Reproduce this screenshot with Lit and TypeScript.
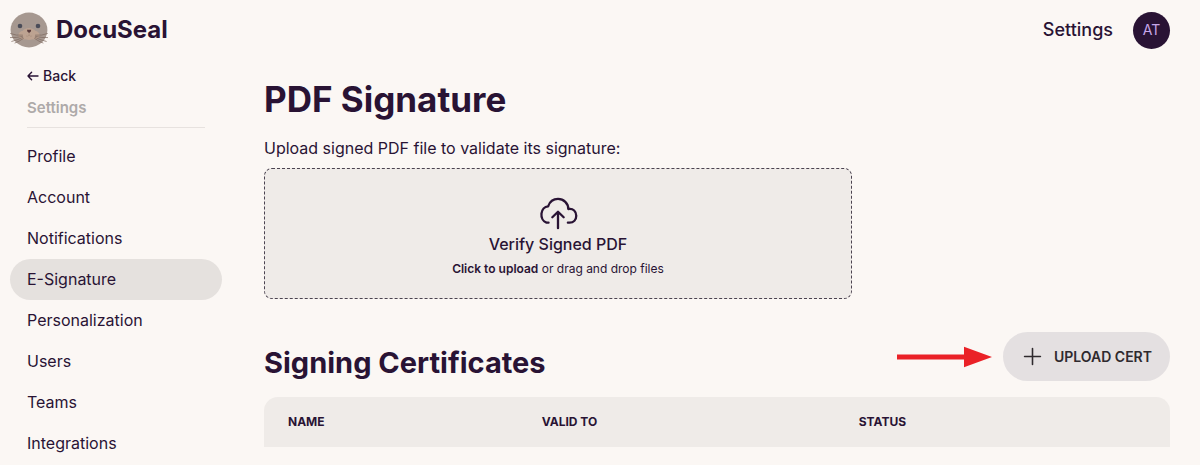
import { LitElement, html, css } from "lit";
import { customElement, property } from "lit/decorators.js";
import { classMap } from "lit/directives/class-map.js";

@customElement("seal-logo")
class SealLogo extends LitElement {
  static styles = css`
    :host { display: block; }
    .logo { display: block; width: 38px; height: 36px; }
  `;
  render() {
    return html`<svg class="logo" viewBox="0 0 38 36" aria-hidden="true">
      <ellipse cx="19" cy="18" rx="18.4" ry="17.4" fill="#a69890" />
      <ellipse cx="19" cy="22" rx="7.5" ry="6" fill="#bda391" />
      <ellipse cx="13.8" cy="23.2" rx="5.4" ry="4.4" fill="#bda391" />
      <ellipse cx="24.2" cy="23.2" rx="5.4" ry="4.4" fill="#bda391" />
      <circle cx="10" cy="14" r="2.3" fill="#4a4c58" />
      <circle cx="28" cy="14" r="2.3" fill="#4a4c58" />
      <path d="M17 17.8h4.2q.4 1.8-2.1 3.2q-2.5-1.4-2.1-3.2z" fill="#593c3c" />
      <path d="M19.1 21v2.2q-1.4 1.6-3 .8M19.1 23.2q1.4 1.6 3 .8" fill="none" stroke="#a08676" stroke-width=".5" />
      <g fill="none" stroke="#7d695e" stroke-width=".7" stroke-linecap="round">
        <path d="M12.5 23.2Q6 23.8.6 21.6M12.5 24.4Q6 26 .4 25.6M12.8 25.5Q7 28.2 1.8 29.4M13.4 26.5Q9 29.5 5 31" />
        <path d="M25.5 23.2Q32 23.8 37.4 21.6M25.5 24.4Q32 26 37.6 25.6M25.2 25.5Q31 28.2 36.2 29.4M24.6 26.5Q29 29.5 33 31" />
      </g>
    </svg>`;
  }
}

@customElement("settings-nav")
class SettingsNav extends LitElement {
  @property() current = "";

  private items = [
    "Profile", "Account", "Notifications", "E-Signature",
    "Personalization", "Users", "Teams", "Integrations",
  ];

  static styles = css`
    :host { display: block; }
    .back {
      display: flex; align-items: center; gap: 4px; padding: 0 17px;
      font-size: 14px; font-weight: 500; line-height: 20px;
      color: inherit; text-decoration: none;
    }
    .arrow { width: 12px; height: 12px; }
    .title {
      margin: 12px 17px 0; padding-bottom: 9px;
      border-bottom: 1px solid #e7e2df;
      font-size: 15px; font-weight: 600; line-height: 20px; color: #aeaaa9;
    }
    .list { list-style: none; margin: 8px 0 0; padding: 0; }
    .item {
      display: block; padding: 9px 17px; border-radius: 24px;
      font-size: 16px; line-height: 23px; color: inherit; text-decoration: none;
    }
    .active { background: #e5e1de; }
  `;
  render() {
    return html`<nav aria-label="Settings">
      <a class="back" href="#">
        <svg class="arrow" viewBox="0 0 12 12" fill="none" stroke="currentColor" stroke-width="1.4" stroke-linecap="round" stroke-linejoin="round" aria-hidden="true">
          <path d="M11 6H1M4.6 2.2L1 6l3.6 3.8" />
        </svg>
        Back
      </a>
      <div class="title">Settings</div>
      <ul class="list">
        ${this.items.map((name) => html`<li>
          <a class=${classMap({ item: true, active: name === this.current })} href="#">${name}</a>
        </li>`)}
      </ul>
    </nav>`;
  }
}

@customElement("app-root")
class AppRoot extends LitElement {
  static styles = css`
    :host {
      display: block; min-height: 100vh; background: #fbf7f4; color: #291334;
      font-family: Inter, "Liberation Sans", sans-serif; font-size: 16px; line-height: 24px;
    }
    .header {
      display: flex; align-items: center; justify-content: space-between;
      height: 60px; padding: 0 30px 0 10px;
    }
    .brand {
      display: flex; align-items: center; gap: 8px; color: inherit; text-decoration: none;
      font-size: 24px; font-weight: 700; line-height: 32px;
    }
    .account { display: flex; align-items: center; gap: 20px; }
    .link { font-size: 18px; font-weight: 500; color: inherit; text-decoration: none; }
    .avatar {
      width: 37px; height: 37px; padding: 0; border: 0; border-radius: 50%;
      background: #291334; color: #c6a6e8; font: inherit; font-size: 14px;
    }
    .body { display: flex; gap: 42px; padding: 6px 30px 0 10px; }
    .side { flex: 0 0 212px; }
    .main { flex: 1; min-width: 0; padding-top: 13px; }
    .h1 { margin: 0; font-size: 35px; line-height: 40px; font-weight: 700; }
    .h2 { flex: 1; margin: 0; font-size: 29px; line-height: 36px; font-weight: 700; }
    .lead { margin: 17px 0 8px; font-size: 16px; line-height: 24px; }
    .drop {
      position: relative; display: flex; flex-direction: column; align-items: center;
      box-sizing: border-box; max-width: 588px; padding: 24px 16px 17px;
      border: 1px dashed #4b4350; border-radius: 8px; background: #efebe8;
    }
    .file { position: absolute; inset: 0; width: 100%; height: 100%; opacity: 0; cursor: pointer; }
    .cloud { width: 42px; height: 39px; }
    .verb { font-weight: 500; }
    .hint { font-size: 12px; line-height: 25px; }
    .strong { font-weight: 600; }
    .row { display: flex; align-items: flex-end; gap: 11px; margin: 33px 0 16px; }
    .pointer { align-self: center; width: 95px; height: 22px; }
    .upload {
      display: flex; align-items: center; gap: 12px; height: 49px; padding: 0 18px 0 20px;
      border: 0; border-radius: 25px; background: #e4e0e1; color: #2f2a2e;
      font: inherit; font-size: 14px; font-weight: 600;
    }
    .plus { width: 19px; height: 19px; }
    .table {
      width: 100%; border-spacing: 0; table-layout: fixed; overflow: hidden;
      border-radius: 14px 14px 0 0; background: #efebe8;
    }
    .th {
      box-sizing: border-box; padding: 13px 24px; text-align: left;
      font-size: 12px; line-height: 24px; font-weight: 700;
    }
    .name { width: 28%; }
    .valid { width: 35%; }
  `;
  render() {
    return html`
      <header class="header">
        <a class="brand" href="#"><seal-logo></seal-logo>DocuSeal</a>
        <div class="account">
          <a class="link" href="#">Settings</a>
          <button class="avatar">AT</button>
        </div>
      </header>
      <div class="body">
        <settings-nav class="side" current="E-Signature"></settings-nav>
        <main class="main">
          <h1 class="h1">PDF Signature</h1>
          <p class="lead">Upload signed PDF file to validate its signature:</p>
          <label class="drop">
            <input class="file" type="file" accept="application/pdf" />
            <svg class="cloud" viewBox="0 0 40 37" fill="none" stroke="currentColor" stroke-width="2.2" stroke-linecap="round" stroke-linejoin="round" aria-hidden="true">
              <path d="M11 28.2H9A6.9 8 0 0 1 10.6 12.6C12.3 7.8 16 5.6 20 5.6C25.5 5.6 29.8 9.8 29.8 15.2C34.6 14.4 37.4 17.6 37.4 21.6C37.4 25.4 34.8 28.2 31 28.2H29.4" />
              <path d="M20 33.4V18.4M14.6 23L20 17.8l5.4 5.2" />
            </svg>
            <span class="verb">Verify Signed PDF</span>
            <span class="hint"><span class="strong">Click to upload</span> or drag and drop files</span>
          </label>
          <div class="row">
            <h2 class="h2">Signing Certificates</h2>
            <svg class="pointer" viewBox="0 0 95 22" fill="#ea2127" aria-hidden="true">
              <path d="M0 8.4H67V.8L95 11L67 21.2V13.4H0z" />
            </svg>
            <button class="upload">
              <svg class="plus" viewBox="0 0 18 18" fill="none" stroke="currentColor" stroke-width="1.5" stroke-linecap="round" aria-hidden="true">
                <path d="M9 1.5v15M1.5 9h15" />
              </svg>
              UPLOAD CERT
            </button>
          </div>
          <table class="table">
            <thead>
              <tr>
                <th class="th name" scope="col">NAME</th>
                <th class="th valid" scope="col">VALID TO</th>
                <th class="th" scope="col">STATUS</th>
              </tr>
            </thead>
          </table>
        </main>
      </div>
    `;
  }
}
